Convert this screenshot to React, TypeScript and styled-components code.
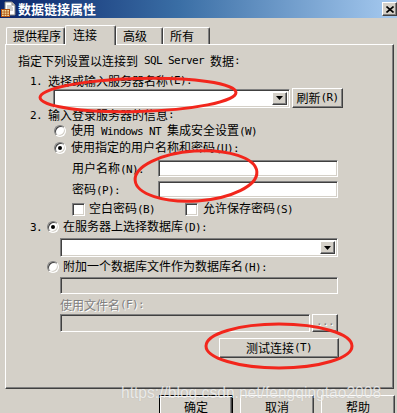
import React from "react";
import styled, { createGlobalStyle, css } from "styled-components";

const Global = createGlobalStyle`
  html, body { margin: 0; padding: 0; }
  body {
    background: #d4d0c8;
    font-family: "Noto Sans CJK SC", "Liberation Sans", sans-serif;
    font-size: 12px;
    color: #000;
    overflow: hidden;
  }
`;

const Window = styled.div`
  position: relative;
  width: 397px;
  height: 413px;
  overflow: hidden;
  background: #d4d0c8;
  display: flex;
  flex-direction: column;
`;

const TitleBar = styled.div`
  height: 18px;
  flex: none;
  display: flex;
  align-items: center;
  padding-left: 1px;
  background: linear-gradient(to right, #0a246a, #3a6ea5 45%, #a6caf0);
`;

const TitleText = styled.div`
  flex: 1;
  margin-left: 1px;
  color: #fff;
  font-weight: bold;
  font-size: 13px;
  line-height: 18px;
  white-space: nowrap;
`;

const CloseBtn = styled.div`
  box-sizing: border-box;
  width: 15px;
  height: 14px;
  background: #d4d0c8;
  border: 1px solid;
  border-color: #fff #404040 #404040 #fff;
  box-shadow: inset -1px -1px #808080;
  display: flex;
  align-items: center;
  justify-content: center;
`;

const Main = styled.div`
  flex: 1;
  display: flex;
  flex-direction: column;
  padding: 0 3px 0 5px;
`;

const TabRow = styled.div`
  height: 26px;
  flex: none;
  display: flex;
  align-items: flex-end;
  padding-left: 1px;
  position: relative;
  z-index: 2;
`;

const Tab = styled.div<{ $w: number; $active?: boolean }>`
  box-sizing: border-box;
  width: ${(p) => p.$w}px;
  height: ${(p) => (p.$active ? 20 : 17)}px;
  margin-bottom: ${(p) => (p.$active ? -1 : 0)}px;
  padding-left: ${(p) => (p.$active ? 7 : 6)}px;
  padding-bottom: ${(p) => (p.$active ? 2 : 0)}px;
  background: #d4d0c8;
  border-top: 1px solid #fff;
  border-left: 1px solid #fff;
  border-right: 1px solid #404040;
  box-shadow: inset -1px 0 #808080;
  border-radius: 2px 2px 0 0;
  display: flex;
  align-items: center;
  line-height: 14px;
  white-space: nowrap;
`;

const Panel = styled.div`
  box-sizing: border-box;
  width: 389px;
  height: 345px;
  flex: none;
  border: 1px solid;
  border-color: #fff #404040 #404040 #fff;
  box-shadow: inset -1px -1px #808080;
  padding: 9px 0 0 12px;
  display: flex;
  flex-direction: column;
`;

const Row = styled.div<{ $mt?: number; $pl?: number; $h?: number; $gap?: number; $disabled?: boolean }>`
  display: flex;
  align-items: center;
  height: ${(p) => p.$h ?? 14}px;
  line-height: 14px;
  margin-top: ${(p) => p.$mt ?? 0}px;
  padding-left: ${(p) => p.$pl ?? 0}px;
  gap: ${(p) => p.$gap ?? 0}px;
  white-space: nowrap;
  ${(p) =>
    p.$disabled &&
    css`
      color: #808080;
      text-shadow: 1px 1px 0 #fff;
    `}
`;

const Num = styled.span<{ $w: number }>`
  width: ${(p) => p.$w}px;
  flex: none;
`;

const Label = styled.span<{ $w: number }>`
  width: ${(p) => p.$w}px;
  flex: none;
`;

const Lat = styled.span`
  font-family: "DejaVu Sans Mono", "Liberation Mono", monospace;
  font-size: 11px;
  letter-spacing: -0.62px;
  white-space: pre;
`;

const sunken = css`
  border: 1px solid;
  border-color: #808080 #fff #fff #808080;
  box-shadow: inset 1px 1px #404040, inset -1px -1px #d4d0c8;
`;

const raised = css`
  border: 1px solid;
  border-color: #fff #404040 #404040 #fff;
  box-shadow: inset -1px -1px #808080;
`;

const Edit = styled.div<{ $w: number; $h: number; $disabled?: boolean }>`
  box-sizing: border-box;
  width: ${(p) => p.$w}px;
  height: ${(p) => p.$h}px;
  flex: none;
  background: ${(p) => (p.$disabled ? "#d4d0c8" : "#fff")};
  ${sunken}
`;

const Combo = styled.div<{ $w: number; $h: number }>`
  box-sizing: border-box;
  width: ${(p) => p.$w}px;
  height: ${(p) => p.$h}px;
  flex: none;
  background: #fff;
  ${sunken}
  padding: 2px;
  display: flex;
  justify-content: flex-end;
`;

const DropBtn = styled.div`
  box-sizing: border-box;
  width: 15px;
  height: 100%;
  background: #d4d0c8;
  ${raised}
  display: flex;
  align-items: center;
  justify-content: center;
`;

const Button = styled.div<{ $w: number; $h: number; $default?: boolean; $disabled?: boolean }>`
  box-sizing: border-box;
  width: ${(p) => p.$w}px;
  height: ${(p) => p.$h}px;
  flex: none;
  background: #d4d0c8;
  ${raised}
  display: flex;
  align-items: center;
  justify-content: center;
  line-height: 14px;
  white-space: nowrap;
  ${(p) =>
    p.$default &&
    css`
      border-color: #000;
      box-shadow: inset 1px 1px #fff, inset -1px -1px #404040, inset -2px -2px #808080;
    `}
  ${(p) =>
    p.$disabled &&
    css`
      color: #808080;
      text-shadow: 1px 1px 0 #fff;
      align-items: flex-end;
      padding-bottom: 2px;
    `}
`;

const Radio = styled.span<{ $checked?: boolean }>`
  box-sizing: border-box;
  width: 12px;
  height: 12px;
  flex: none;
  border-radius: 50%;
  background: #fff;
  border: 1px solid;
  border-color: #808080 #fff #fff #808080;
  box-shadow: inset 1px 1px #404040, inset -1px -1px #d4d0c8;
  display: flex;
  align-items: center;
  justify-content: center;
  &::after {
    content: "";
    width: 4px;
    height: 4px;
    border-radius: 50%;
    background: #000;
    display: ${(p) => (p.$checked ? "block" : "none")};
  }
`;

const Check = styled.span`
  box-sizing: border-box;
  width: 13px;
  height: 13px;
  flex: none;
  background: #fff;
  ${sunken}
`;

const Group = styled.span<{ $w?: number; $gap: number }>`
  display: flex;
  align-items: center;
  gap: ${(p) => p.$gap}px;
  ${(p) => (p.$w ? `width: ${p.$w}px; flex: none;` : "")}
`;

const ButtonBar = styled.div`
  display: flex;
  gap: 7px;
  margin-top: 6px;
  padding-left: 154px;
`;

const Overlay = styled.svg`
  position: absolute;
  left: 0;
  top: 0;
  pointer-events: none;
  z-index: 5;
`;

const Watermark = styled.div`
  position: absolute;
  left: 121px;
  top: 385px;
  z-index: 6;
  font-family: "Liberation Sans", Arial, sans-serif;
  font-size: 15.6px;
  line-height: 16px;
  color: rgba(255, 255, 255, 0.72);
  text-shadow: 0 0 1px rgba(120, 120, 120, 0.35);
  white-space: nowrap;
  pointer-events: none;
`;

function T({ s }: { s: string }) {
  const parts = s.split(/([\x00-\x7f]+)/).filter(Boolean);
  return (
    <>
      {parts.map((p, i) =>
        /^[\x00-\x7f]+$/.test(p) ? <Lat key={i}>{p}</Lat> : <React.Fragment key={i}>{p}</React.Fragment>
      )}
    </>
  );
}

const Arrow = () => (
  <svg width="7" height="4" viewBox="0 0 7 4">
    <polygon points="0,0 7,0 3.5,4" fill="#000" />
  </svg>
);

const AppIcon = () => (
  <svg width="16" height="16" viewBox="0 0 16 16">
    <path d="M4 1h7l3 3v10H4z" fill="#fff" stroke="#808080" strokeWidth="1" />
    <path d="M11 1v3h3" fill="#d4d0c8" stroke="#808080" strokeWidth="1" />
    <path d="M6 5h5M6 7h6M6 9h6" stroke="#a0a0a0" strokeWidth="1" />
    <rect x="0.5" y="8.5" width="8" height="7" fill="#f4e0a0" stroke="#b05010" strokeWidth="1" />
    <path d="M0.5 11h8M0.5 13.3h8M3.2 8.5v7M5.8 8.5v7" stroke="#b05010" strokeWidth="0.8" />
  </svg>
);

const CloseIcon = () => (
  <svg width="8" height="7" viewBox="0 0 8 7">
    <path d="M0.5 0.5l7 6M7.5 0.5l-7 6" stroke="#000" strokeWidth="1.6" />
  </svg>
);

export default function App() {
  return (
    <>
      <Global />
      <Window>
        <TitleBar>
          <AppIcon />
          <TitleText>数据链接属性</TitleText>
          <CloseBtn>
            <CloseIcon />
          </CloseBtn>
        </TitleBar>
        <Main>
          <TabRow>
            <Tab $w={59}>提供程序</Tab>
            <Tab $w={51} $active>
              连接
            </Tab>
            <Tab $w={47}>高级</Tab>
            <Tab $w={47}>所有</Tab>
          </TabRow>
          <Panel>
            <Row>
              <T s="指定下列设置以连接到 SQL Server 数据:" />
            </Row>
            <Row $mt={6} $pl={12}>
              <Num $w={18}>
                <T s="1." />
              </Num>
              <T s="选择或输入服务器名称(E):" />
            </Row>
            <Row $h={20} $pl={35} $gap={2}>
              <Combo $w={237} $h={19}>
                <DropBtn>
                  <Arrow />
                </DropBtn>
              </Combo>
              <Button $w={51} $h={20}>
                <T s="刷新(R)" />
              </Button>
            </Row>
            <Row $pl={12}>
              <Num $w={18}>
                <T s="2." />
              </Num>
              <T s="输入登录服务器的信息:" />
            </Row>
            <Row $mt={2} $pl={36} $gap={5}>
              <Radio />
              <span>
                <T s="使用 Windows NT 集成安全设置(W)" />
              </span>
            </Row>
            <Row $mt={3} $pl={36} $gap={5}>
              <Radio $checked />
              <span>
                <T s="使用指定的用户名称和密码(U):" />
              </span>
            </Row>
            <Row $mt={5} $h={17} $pl={54}>
              <Label $w={86}>
                <T s="用户名称(N):" />
              </Label>
              <Edit $w={180} $h={17} />
            </Row>
            <Row $mt={4} $h={17} $pl={54}>
              <Label $w={86}>
                <T s="密码(P):" />
              </Label>
              <Edit $w={180} $h={17} />
            </Row>
            <Row $mt={4} $pl={54}>
              <Group $w={113} $gap={4}>
                <Check />
                <span>
                  <T s="空白密码(B)" />
                </span>
              </Group>
              <Group $gap={5}>
                <Check />
                <span>
                  <T s="允许保存密码(S)" />
                </span>
              </Group>
            </Row>
            <Row $mt={4} $pl={12}>
              <Num $w={17}>
                <T s="3." />
              </Num>
              <Group $gap={4}>
                <Radio $checked />
                <span>
                  <T s="在服务器上选择数据库(D):" />
                </span>
              </Group>
            </Row>
            <Row $mt={4} $h={19} $pl={42}>
              <Combo $w={278} $h={19}>
                <DropBtn>
                  <Arrow />
                </DropBtn>
              </Combo>
            </Row>
            <Row $mt={3} $pl={29} $gap={4}>
              <Radio />
              <span>
                <T s="附加一个数据库文件作为数据库名(H):" />
              </span>
            </Row>
            <Row $mt={3} $h={17} $pl={42}>
              <Edit $w={278} $h={17} $disabled />
            </Row>
            <Row $mt={4} $pl={42} $disabled>
              <T s="使用文件名(F):" />
            </Row>
            <Row $mt={2} $h={18} $pl={42} $gap={2}>
              <Edit $w={250} $h={18} $disabled />
              <Button $w={26} $h={18} $disabled>
                <Lat>...</Lat>
              </Button>
            </Row>
            <Row $mt={6} $h={20} $pl={201}>
              <Button $w={120} $h={20}>
                <T s="测试连接(T)" />
              </Button>
            </Row>
          </Panel>
          <ButtonBar>
            <Button $w={74} $h={23} $default>
              确定
            </Button>
            <Button $w={74} $h={23}>
              取消
            </Button>
            <Button $w={74} $h={23}>
              帮助
            </Button>
          </ButtonBar>
        </Main>
        <Overlay width="397" height="413" viewBox="0 0 397 413">
          <g fill="none" stroke="#f2261c" strokeWidth="3">
            <ellipse cx="138" cy="95" rx="98" ry="16.5" transform="rotate(-1.5 138 95)" />
            <ellipse cx="196" cy="176" rx="61" ry="25" transform="rotate(-4 196 176)" />
            <ellipse cx="279" cy="346" rx="73" ry="22" />
          </g>
        </Overlay>
        <Watermark>https://blog.csdn.net/fengqingtao2008</Watermark>
      </Window>
    </>
  );
}
